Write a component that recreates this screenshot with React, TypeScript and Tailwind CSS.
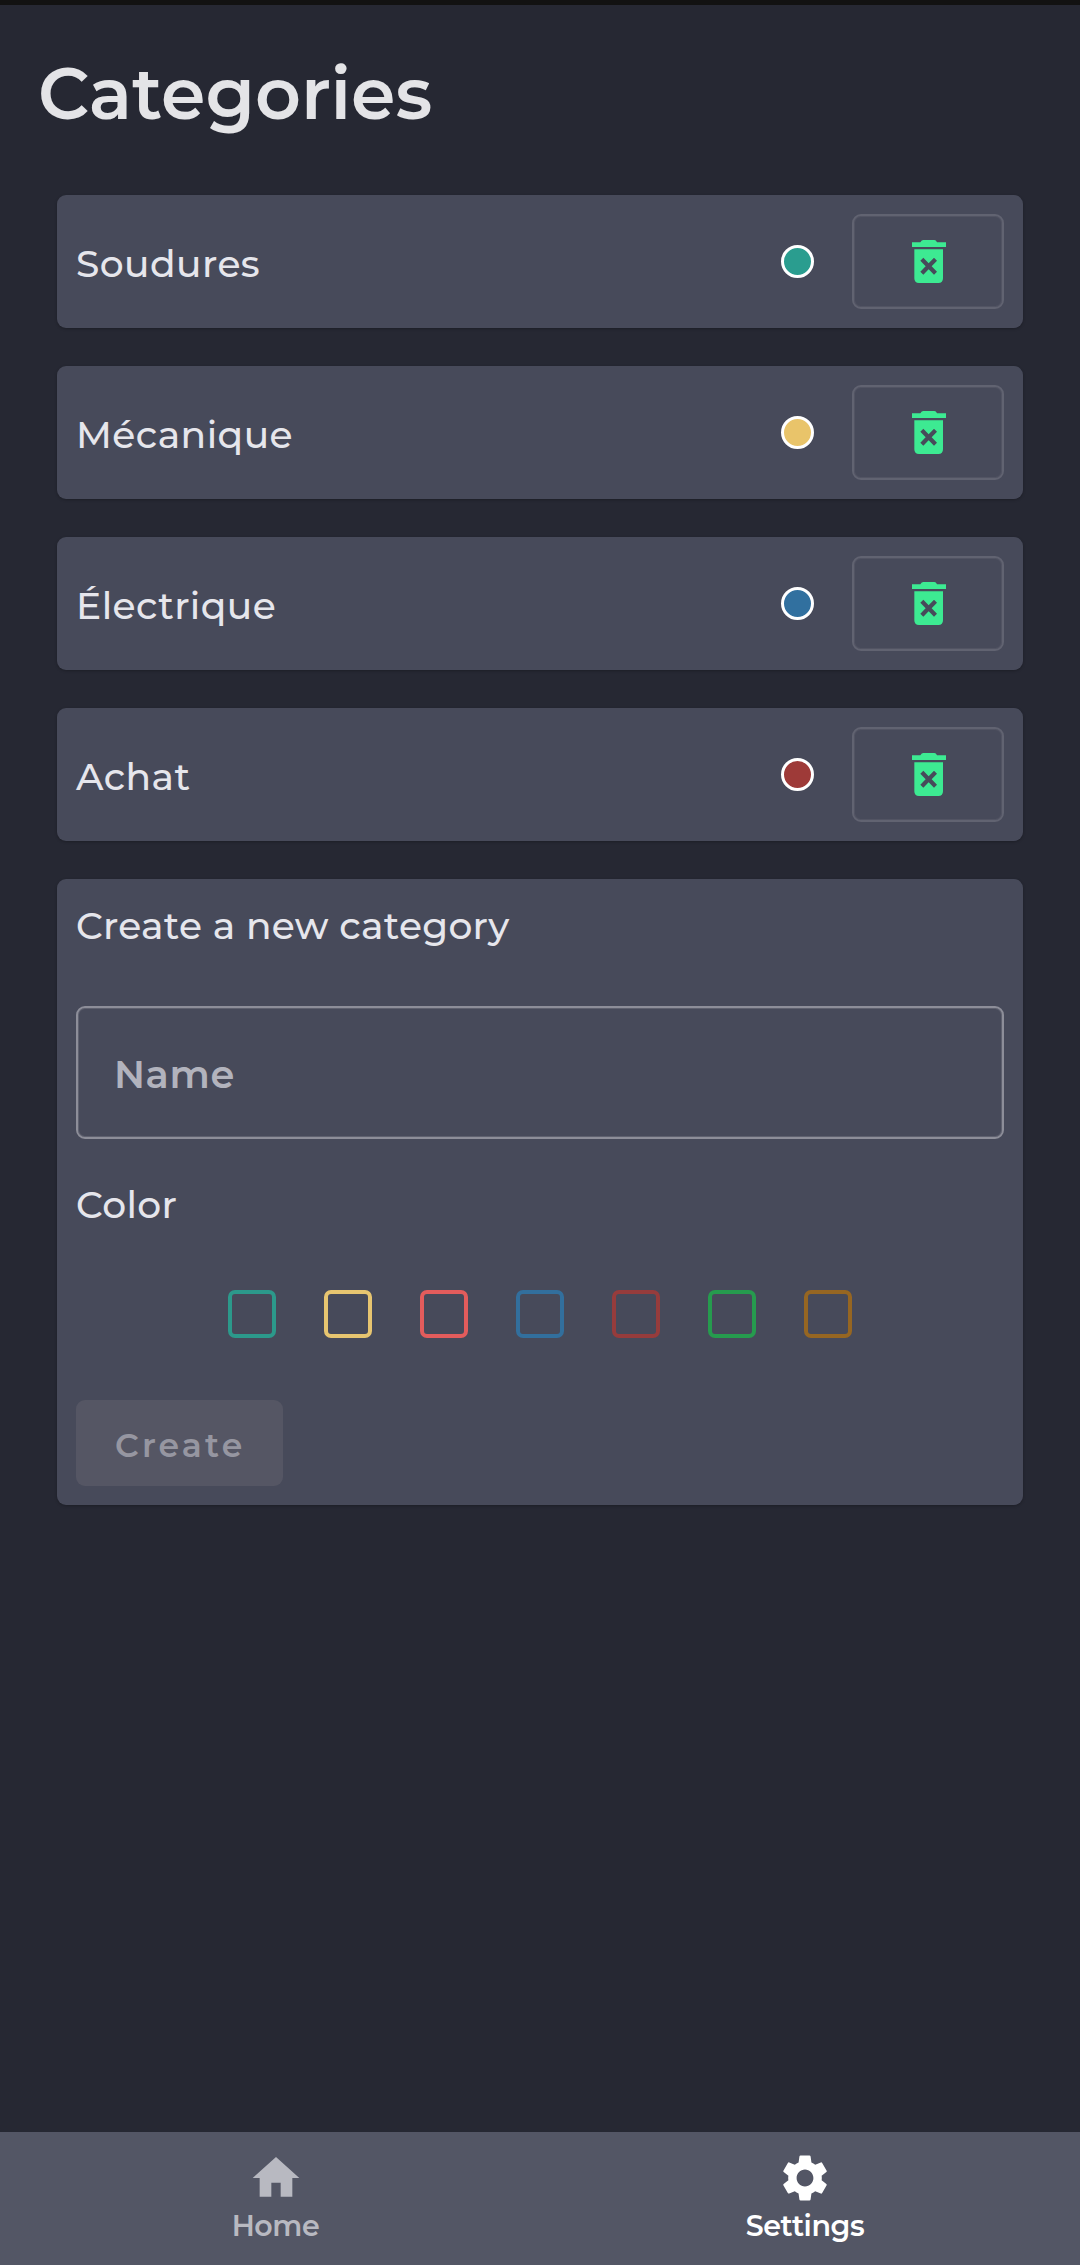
import { MdHome, MdSettings } from "react-icons/md";

const categories = [
  { name: "Soudures", dot: "bg-[#2a9d8f]" },
  { name: "Mécanique", dot: "bg-[#e9c46a]" },
  { name: "Électrique", dot: "bg-[#31709f]" },
  { name: "Achat", dot: "bg-[#9e3a38]" },
];

const swatches = [
  "border-[#2c998b]",
  "border-[#e7c570]",
  "border-[#e35c5c]",
  "border-[#326f9d]",
  "border-[#963c3c]",
  "border-[#269b4e]",
  "border-[#966622]",
];

function TrashIcon() {
  return (
    <svg width="34" height="43" viewBox="0 0 102 129" fill="#3dea92">
      <path d="M0 7H25Q29 0 34 0H67Q72 0 75 7H102V21H0Z" />
      <path
        fillRule="evenodd"
        d="M7 28H93V115Q93 129 79 129H21Q7 129 7 115ZM25 62L41 79L25 95L34 104L50 88L66 104L75 95L59 79L75 62L66 53L50 70L34 53Z"
      />
    </svg>
  );
}

export default function App() {
  return (
    <div className="flex h-[2265px] w-[1080px] flex-col border-t-[5px] border-[#121212] bg-[#262833] font-[Montserrat,Inter,sans-serif] font-medium text-[#e6e6ec]">
      <h1 className="mt-[45px] ml-[38px] h-[88px] text-[71.3px] leading-[88px] font-semibold text-[#e4e4e7]">
        Categories
      </h1>
      <main className="mx-[57px] mt-[57px] flex flex-1 flex-col gap-[38px] text-[37.6px] tracking-[0.3px]">
        {categories.map((c) => (
          <div
            key={c.name}
            className="flex h-[133px] items-center rounded-[9px] bg-[#474a5a] px-[19px] shadow-[0_1px_3px_rgba(0,0,0,0.25)]"
          >
            <span className="flex-1 pt-[6px] tracking-[0.45px]">{c.name}</span>
            <span className={`mr-[38px] size-[33px] rounded-full border-[3px] border-white ${c.dot}`} />
            <button className="flex h-[95px] w-[152px] items-center justify-center rounded-[9px] border-2 border-[#616371] pl-[2px] shadow-[inset_0_0_0_1px_#525463]">
              <TrashIcon />
            </button>
          </div>
        ))}
        <form className="flex h-[626px] flex-col rounded-[9px] bg-[#474a5a] px-[19px] shadow-[0_1px_3px_rgba(0,0,0,0.25)]">
          <h2 className="mt-[19px] h-[56px] leading-[56px]">Create a new category</h2>
          <div className="mt-[52px] flex h-[133px] items-center rounded-[9px] border-2 border-[#8d8e99] px-[36px] pt-[4px] text-[38.3px] font-semibold tracking-[0.6px] text-[#b2b3bd] shadow-[inset_0_0_0_1px_#5f616f]">
            Name
          </div>
          <h2 className="mt-[38px] h-[56px] leading-[56px]">Color</h2>
          <div className="mt-[57px] flex justify-center gap-[48px]">
            {swatches.map((s) => (
              <span key={s} className={`size-[48px] rounded-[7px] border-4 ${s}`} />
            ))}
          </div>
          <button className="mt-[62px] flex h-[86px] w-[207px] items-center rounded-[9px] bg-[#555664] pt-[5px] pl-[39px] text-[33px] font-semibold tracking-[3.2px] text-[#9696a1]">
            Create
          </button>
        </form>
      </main>
      <nav className="flex h-[133px] justify-center bg-[#535665] text-[28.5px] font-semibold tracking-[-0.4px]">
        <div className="flex w-[530px] flex-col items-center pt-[18px] pl-[1px] text-[#b8b9c1]">
          <MdHome size={56} />
          <span className="pt-[2px] leading-[36px]">Home</span>
        </div>
        <div className="flex w-[530px] flex-col items-center pt-[18px] text-white">
          <MdSettings size={56} />
          <span className="pt-[2px] leading-[36px]">Settings</span>
        </div>
      </nav>
    </div>
  );
}
